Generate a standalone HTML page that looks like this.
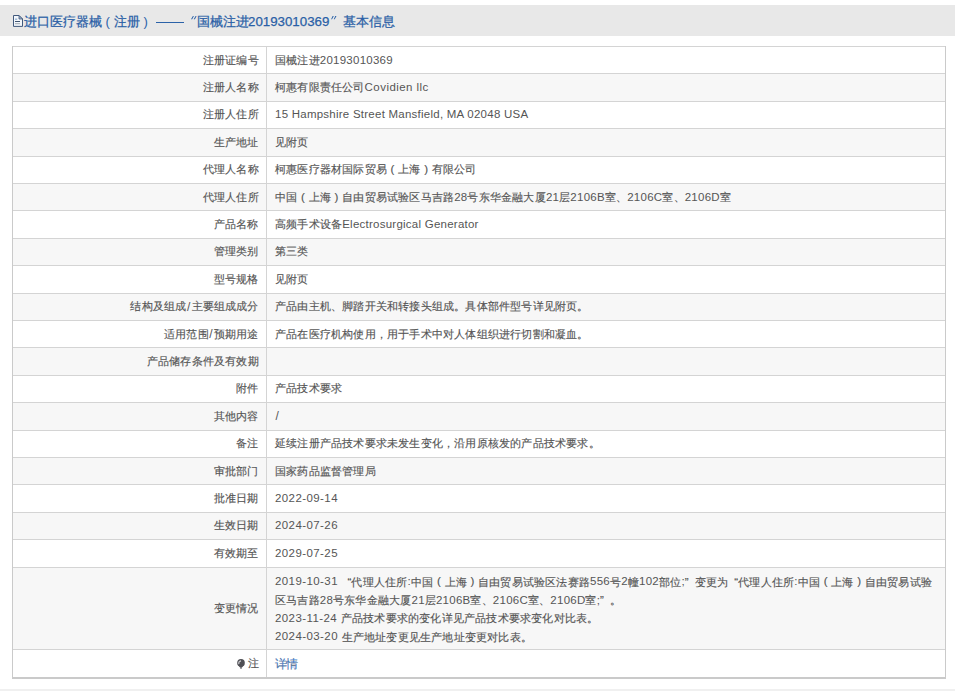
<!DOCTYPE html>
<html><head><meta charset="utf-8"><title>基本信息</title>
<style>
html,body{margin:0;padding:0;background:#fff;}
body{width:955px;height:691px;overflow:hidden;position:relative;font-family:"Liberation Sans",sans-serif;}
.hdr{position:absolute;left:0;top:5px;width:955px;height:31px;background:#e8e8e8;}
.ico{position:absolute;left:12px;top:9px;}
.h{position:absolute;top:7.5px;font-size:13.4px;line-height:18px;color:#2a5fa6;white-space:nowrap;-webkit-text-stroke:0.25px #2a5fa6;}
.hd{letter-spacing:0px;font-size:13.3px;top:7.5px;}
.hq{position:absolute;top:10.8px;}
.hp{position:absolute;top:8px;font-size:13px;line-height:18px;color:#2b62a8;}
.dash{position:absolute;left:156px;top:17px;width:28px;height:1.2px;background:#2b62a8;}
.r{position:absolute;left:12px;width:933px;box-sizing:border-box;border-top:1px solid #d4d4d4;}
.w{background:#fff} .g{background:#f7f7f7}
.l,.v{position:absolute;top:0;bottom:0;display:flex;align-items:center;font-size:11.49px;color:#555;white-space:nowrap;letter-spacing:0.2px;-webkit-text-stroke:0.15px #555;}
.l{right:686.3px;}
.v{left:263px;}
.e{letter-spacing:0.25px;position:relative;top:-0.6px;-webkit-text-stroke:0;}
.e.d{letter-spacing:0.42px;} .e.sl{letter-spacing:1.2px;padding-left:0.6px;font-size:12px;top:0px;} .e.c{letter-spacing:0.45px;}
.pl{display:inline-block;width:11.2px;text-align:center;position:relative;top:-0.5px;}
.ql,.qr{display:inline-block;width:9.9px;position:relative;top:0px;}
.ql{text-align:right} .qr{text-align:left}
.v.m{display:block;top:5.3px;line-height:18.3px;}
.lnk{color:#3d7fd8;font-size:12.4px;letter-spacing:-0.8px;top:1.8px;}
.pin{margin-right:2.3px;position:relative;top:0.4px;}
.col{position:absolute;left:266px;top:46px;width:1px;height:630.80px;background:#d4d4d4;}
.bl{position:absolute;left:12px;top:46px;width:1px;height:632.80px;background:#cacaca;}
.br{position:absolute;left:945px;top:46px;width:1px;height:632.80px;background:#cacaca;}
.bb{position:absolute;left:12px;top:676.80px;width:934px;height:2px;background:#cacaca;}
.foot{position:absolute;left:0;top:689px;width:955px;height:2px;background:#f0f0f0;}
</style></head><body>
<div class="hdr"><svg class="ico" width="12" height="14" viewBox="0 0 12 14">
<path d="M1.5 1.5H7L10.5 5V12.4H1.5Z" fill="#f2f6fb" stroke="#41597c" stroke-width="1"/>
<path d="M7 1.5V5H10.5Z" fill="#9fb3cc" stroke="#41597c" stroke-width="0.8" stroke-linejoin="round"/>
<rect x="3" y="4.7" width="2.2" height="0.9" fill="#6a90bd"/>
<rect x="3" y="7" width="5" height="1" fill="#3f5470"/>
<rect x="3" y="9.2" width="5" height="1" fill="#a0a8b0"/>
</svg>
<span class="h" style="left:24px">进口医疗器械</span>
<span class="hp" style="left:105.5px">(</span>
<span class="h" style="left:114px">注册</span>
<span class="hp" style="left:143.5px">)</span>
<div class="dash"></div>
<svg class="hq" style="left:191.3px" width="6" height="4" viewBox="0 0 6 4"><path d="M1.9 0H2.9L1.2 3.2H0Z M4.6 0H5.6L3.9 3.2H2.7Z" fill="#2b62a8"/></svg>
<span class="h" style="left:197px">国械注进</span>
<span class="h hd" style="left:248px">20193010369</span>
<svg class="hq" style="left:330.7px" width="6" height="4" viewBox="0 0 6 4"><path d="M1.6 0H2.8L1 3.2H0.1Z M4.3 0H5.5L3.7 3.2H2.8Z" fill="#2b62a8"/></svg>
<span class="h" style="left:343px">基本信息</span>
</div>
<div class="r w" style="top:46.00px;height:27.40px"><div class="l">注册证编号</div><div class="v">国械注进<span class="e">20193010369</span></div></div><div class="r g" style="top:73.40px;height:27.40px"><div class="l">注册人名称</div><div class="v">柯惠有限责任公司<span class="e c">Covidien llc</span></div></div><div class="r w" style="top:100.80px;height:27.40px"><div class="l">注册人住所</div><div class="v"><span class="e">15 Hampshire Street Mansfield, MA 02048 USA</span></div></div><div class="r g" style="top:128.20px;height:27.40px"><div class="l">生产地址</div><div class="v">见附页</div></div><div class="r w" style="top:155.60px;height:27.40px"><div class="l">代理人名称</div><div class="v">柯惠医疗器材国际贸易<span class="pl">(</span>上海<span class="pl">)</span>有限公司</div></div><div class="r g" style="top:183.00px;height:27.40px"><div class="l">代理人住所</div><div class="v">中国<span class="pl">(</span>上海<span class="pl">)</span>自由贸易试验区马吉路<span class="e">28</span>号东华金融大厦<span class="e">21</span>层<span class="e">2106B</span>室、<span class="e">2106C</span>室、<span class="e">2106D</span>室</div></div><div class="r w" style="top:210.40px;height:27.40px"><div class="l">产品名称</div><div class="v">高频手术设备<span class="e">Electrosurgical Generator</span></div></div><div class="r g" style="top:237.80px;height:27.40px"><div class="l">管理类别</div><div class="v">第三类</div></div><div class="r w" style="top:265.20px;height:27.40px"><div class="l">型号规格</div><div class="v">见附页</div></div><div class="r g" style="top:292.60px;height:27.40px"><div class="l">结构及组成<span class="e sl">/</span>主要组成成分</div><div class="v">产品由主机、脚踏开关和转接头组成。具体部件型号详见附页。</div></div><div class="r w" style="top:320.00px;height:27.40px"><div class="l">适用范围<span class="e sl">/</span>预期用途</div><div class="v">产品在医疗机构使用，用于手术中对人体组织进行切割和凝血。</div></div><div class="r g" style="top:347.40px;height:27.40px"><div class="l">产品储存条件及有效期</div><div class="v"></div></div><div class="r w" style="top:374.80px;height:27.40px"><div class="l">附件</div><div class="v">产品技术要求</div></div><div class="r g" style="top:402.20px;height:27.40px"><div class="l">其他内容</div><div class="v"><span class="e sl">/</span></div></div><div class="r w" style="top:429.60px;height:27.40px"><div class="l">备注</div><div class="v">延续注册产品技术要求未发生变化，沿用原核发的产品技术要求。</div></div><div class="r g" style="top:457.00px;height:27.40px"><div class="l">审批部门</div><div class="v">国家药品监督管理局</div></div><div class="r w" style="top:484.40px;height:27.40px"><div class="l">批准日期</div><div class="v"><span class="e d">2022-09-14</span></div></div><div class="r g" style="top:511.80px;height:27.40px"><div class="l">生效日期</div><div class="v"><span class="e d">2024-07-26</span></div></div><div class="r w" style="top:539.20px;height:27.40px"><div class="l">有效期至</div><div class="v"><span class="e d">2029-07-25</span></div></div><div class="r g" style="top:566.60px;height:82.80px"><div class="l">变更情况</div><div class="v m"><span class="e d">2019-10-31 </span><span class="ql">“</span>代理人住所<span class="e">:</span>中国<span class="pl">(</span>上海<span class="pl">)</span>自由贸易试验区法赛路<span class="e">556</span>号<span class="e">2</span>幢<span class="e">102</span>部位<span class="e">;</span><span class="qr">”</span>变更为<span class="ql">“</span>代理人住所<span class="e">:</span>中国<span class="pl">(</span>上海<span class="pl">)</span>自由贸易试验<br>区马吉路<span class="e">28</span>号东华金融大厦<span class="e">21</span>层<span class="e">2106B</span>室、<span class="e">2106C</span>室、<span class="e">2106D</span>室<span class="e">;</span><span class="qr">”</span>。<br><span class="e d">2023-11-24 </span>产品技术要求的变化详见产品技术要求变化对比表。<br><span class="e d">2024-03-20 </span>生产地址变更见生产地址变更对比表。</div></div><div class="r w" style="top:649.40px;height:27.40px"><div class="l"><svg class="pin" width="8" height="10" viewBox="0 0 8 10"><circle cx="4" cy="3.9" r="3.8" fill="#4f4f55"/><path d="M0.9 5.6L3 8.4H5L7.1 5.6Z" fill="#4f4f55"/><rect x="3" y="8.3" width="2" height="1.3" fill="#6a6a70"/><path d="M1.8 5.2C1.5 3.6 2.4 2.2 4 1.9" fill="none" stroke="#c9c9cc" stroke-width="1.1"/></svg>注</div><div class="v lnk">详情</div></div>
<div class="col"></div><div class="bl"></div><div class="br"></div><div class="bb"></div>
<div class="foot"></div>
</body></html>
